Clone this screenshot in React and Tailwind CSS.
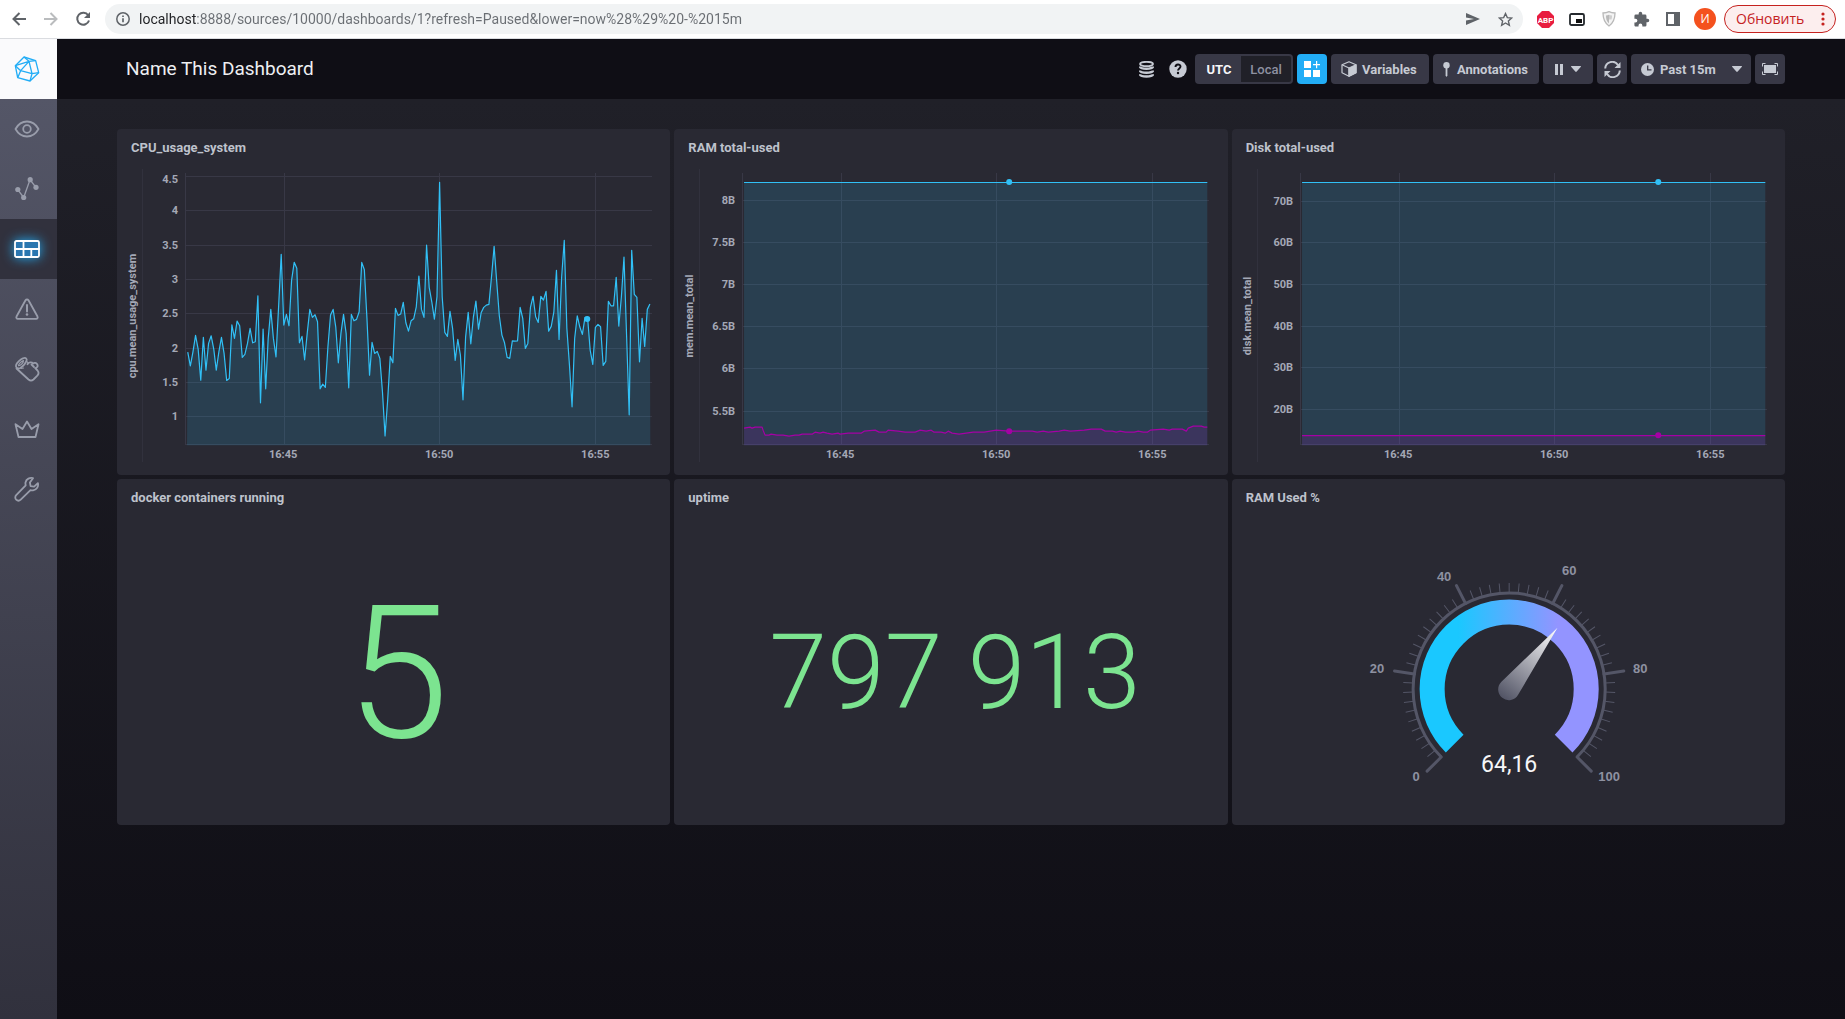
import React from "react";

/* ---------- browser bar ---------- */

function BrowserBar() {
  return (
    <div className="flex h-[39px] shrink-0 items-center border-b border-[#dadce0] bg-white pl-[7px] pr-[9px]">
      <div className="flex items-center text-[#5f6368]">
        <button aria-label="Back" className="grid h-8 w-6 place-items-center">
          <svg width="14" height="14" viewBox="0 0 14 14" fill="none" stroke="currentColor" strokeWidth="2">
            <path d="M14 7H1.500M7.500 1 1.500 7l6 6" />
          </svg>
        </button>
        <button aria-label="Forward" className="ml-2 grid h-8 w-6 place-items-center text-[#babcbe]">
          <svg width="14" height="14" viewBox="0 0 14 14" fill="none" stroke="currentColor" strokeWidth="2">
            <path d="M0 7h12.500M6.500 1l6 6-6 6" />
          </svg>
        </button>
        <button aria-label="Reload" className="ml-2 grid h-8 w-6 place-items-center">
          <svg width="16" height="16" viewBox="0 0 16 16" fill="none" stroke="currentColor" strokeWidth="2">
            <path d="M13.200 4.300A6 6 0 1 0 14 9.500" />
            <path d="M15 1v6H9z" fill="currentColor" stroke="none" />
          </svg>
        </button>
      </div>
      <div className="ml-[10px] flex h-[30px] min-w-0 flex-1 items-center rounded-full bg-[#f1f3f4] pl-[11px] pr-[2px]">
        <svg width="14" height="14" viewBox="0 0 14 14" fill="none" stroke="#5f6368" strokeWidth="1.500" className="shrink-0">
          <circle cx="7" cy="7" r="6.200" />
          <path d="M7 6.200v4M7 3.500v1.600" strokeWidth="1.700" />
        </svg>
        {/* the host name is darker than the rest of the address */}
        <input
          aria-label="Address"
          type="text"
          defaultValue="localhost:8888/sources/10000/dashboards/1?refresh=Paused&lower=now%28%29%20-%2015m"
          className="ml-[9px] min-w-0 flex-1 bg-[linear-gradient(90deg,#202124_57px,#6a6e73_57px)] bg-clip-text font-['Roboto',sans-serif] text-[14px] leading-5 text-transparent outline-none"
        />
        <button aria-label="Send" className="grid h-6 w-8 place-items-center">
          <svg width="14" height="12" viewBox="0 0 14 12" fill="#5f6368">
            <path d="M0 0l14 6L0 12V7.500L8 6 0 4.500z" />
          </svg>
        </button>
        <button aria-label="Bookmark" className="grid h-6 w-8 place-items-center">
          <svg width="15" height="15" viewBox="0 0 24 24" fill="none" stroke="#5f6368" strokeWidth="2.200">
            <path d="M12 2.500l2.900 6.500 7 .7-5.300 4.700 1.600 6.900-6.200-3.700-6.200 3.700 1.600-6.900L2.100 9.700l7-.7z" />
          </svg>
        </button>
      </div>
      <div className="flex items-center">
        <button aria-label="ABP" className="ml-[6px] grid h-8 w-8 place-items-center">
          <svg width="17" height="17" viewBox="0 0 17 17">
            <path d="M5 0h7l5 5v7l-5 5H5l-5-5V5z" fill="#e81d3f" />
            <text x="8.500" y="11.500" textAnchor="middle" fill="#fff" className="font-['Roboto',sans-serif] text-[8px] font-bold">
              ABP
            </text>
          </svg>
        </button>
        <button aria-label="Picture in picture" className="grid h-8 w-8 place-items-center">
          <svg width="16" height="13" viewBox="0 0 16 13">
            <rect x="1" y="1" width="14" height="11" rx="1.500" fill="none" stroke="#24292d" strokeWidth="1.800" />
            <rect x="7" y="6" width="6" height="4" fill="#111" />
          </svg>
        </button>
        <button aria-label="Shield" className="grid h-8 w-8 place-items-center">
          <svg width="14" height="16" viewBox="0 0 14 16">
            <path d="M1 2c2 0 4-.3 6-1.300C9 1.700 11 2 13 2c0 5.500-1 9.500-6 13C2 11.500 1 7.500 1 2z" fill="#f4f4f4" stroke="#b9b9b9" strokeWidth="1.300" />
            <path d="M4 4.500c1.200 0 2-.2 3-.8v8.800C4.500 10.500 4 7.500 4 4.500z" fill="#b9b9b9" />
            <path d="M7 3.700c1 .6 1.800.8 3 .8 0 1.500 0 2.500-.5 4H7z" fill="#cfcfcf" />
          </svg>
        </button>
        <button aria-label="Extensions" className="grid h-8 w-8 place-items-center">
          <svg width="17" height="17" viewBox="0 0 24 24" fill="#5f6368">
            <path d="M20.500 11H19V7a2 2 0 0 0-2-2h-4V3.500a2.500 2.500 0 0 0-5 0V5H4a2 2 0 0 0-2 2v3.800h1.500a2.700 2.700 0 0 1 0 5.400H2V20c0 1.100.9 2 2 2h3.800v-1.500a2.700 2.700 0 0 1 5.400 0V22H17a2 2 0 0 0 2-2v-4h1.500a2.500 2.500 0 0 0 0-5z" />
          </svg>
        </button>
        <button aria-label="Side panel" className="grid h-8 w-8 place-items-center">
          <svg width="14" height="14" viewBox="0 0 14 14">
            <rect x="1" y="1" width="12" height="12" fill="none" stroke="#5f6368" strokeWidth="2" />
            <rect x="8" y="1" width="5" height="12" fill="#5f6368" />
          </svg>
        </button>
        <button className="ml-[5px] grid h-[22px] w-[22px] place-items-center rounded-full bg-[#f4511e] font-['Open_Sans',sans-serif] text-[12px] leading-none text-white">
          И
        </button>
        <button className="ml-2 flex h-7 w-28 items-center justify-between rounded-full border border-[#c5221f] bg-[#fceeee] pl-[11px] pr-[10px] font-['Open_Sans',sans-serif] text-[14px] font-medium leading-none text-[#c5221f]">
          Обновить
          <svg width="4" height="14" viewBox="0 0 4 14" fill="currentColor">
            <circle cx="2" cy="2" r="1.600" />
            <circle cx="2" cy="7" r="1.600" />
            <circle cx="2" cy="12" r="1.600" />
          </svg>
        </button>
      </div>
    </div>
  );
}

/* ---------- side navigation ---------- */

const navIcons = [
  {
    label: "Host List",
    art: (
      <>
        <path d="M1.500 13C4 8.500 7.800 5.500 13 5.500S22 8.500 24.500 13C22 17.500 18.200 20.500 13 20.500S4 17.500 1.500 13z" />
        <circle cx="13" cy="13" r="3.800" />
      </>
    ),
  },
  {
    label: "Explore",
    art: (
      <>
        <path d="M3.700 13.700L9.700 21.500 16 3.700l6 7.800" strokeWidth="1.300" />
        <g fill="currentColor" stroke="none">
          <circle cx="3.800" cy="13.500" r="2.600" />
          <circle cx="9.700" cy="21.500" r="2.600" />
          <circle cx="16.200" cy="3.700" r="2.600" />
          <circle cx="22" cy="11.300" r="2.600" />
        </g>
      </>
    ),
  },
  {
    label: "Dashboards",
    active: true,
    art: (
      <>
        <rect x="1" y="5" width="24" height="16" rx="1.500" fill="#2a77b0" />
        <path d="M1 13h24M9.500 5v16M17.300 13v8" />
      </>
    ),
  },
  {
    label: "Alerting",
    art: (
      <>
        <path d="M11.500 4.300a1.800 1.800 0 0 1 3 0l9 16.200a1.500 1.500 0 0 1-1.300 2.300H3.800a1.500 1.500 0 0 1-1.300-2.300z" />
        <path d="M13 9v6.500" strokeWidth="2" />
        <circle cx="13" cy="18.500" r="1.300" fill="currentColor" stroke="none" />
      </>
    ),
  },
  {
    label: "Log Viewer",
    art: (
      <>
        <path d="M2.500 12.500l12 11c1.500 1.300 3.500 1.300 5 0l3.800-3.800c1.500-1.700 1.500-3.700.2-5.200l-2.300-2.300c2.300-.5 3-2.300 2-4-1-1.500-3-1.700-4.200-.7-1-1.500-4.500-1.500-5.500.7" />
        <path d="M9.500 2.200c2-1 3.800.5 3 2.600-1 2.800-3.500 5.700-6.200 7.200-2.500 1.300-4.800-.3-4.300-2.700C2.700 6.500 6.500 3.300 9.500 2.200z" />
        <path d="M9.500 4.500c-2.500 1-5 3.500-5 5.200 1.700.3 5-2.700 5-5.200zM12.500 5l2 2.500M7 12.500l2.500-.5" strokeWidth="1.200" />
        <path d="M17.500 8.500l2.500 2.500" />
      </>
    ),
  },
  {
    label: "Admin",
    art: <path d="M4.500 21L1.500 8.200l7 4.800L13 5.500l4.500 7.500 7-4.800L21.500 21z" />,
  },
  {
    label: "Configuration",
    art: (
      <path d="M19 2.200c-3-1-6.800.8-7.500 4.300-.2 1 0 2 .2 2.800L2.200 19.200a3 3 0 0 0 4.500 4.500l9.800-9.600c.8.300 1.700.4 2.600.2 3.600-.6 5.700-4 4.800-7.200l-3.800 3.600-3.500-.6-.7-3.600z" />
    ),
  },
];

function SideNav() {
  return (
    <nav className="flex w-[57px] shrink-0 flex-col bg-linear-to-b from-[#545667] from-[60px] to-[#31313d]">
      <a href="#home" aria-label="Home" className="grid h-[60px] place-items-center bg-[#fafafc] pr-1">
        <svg width="26" height="26" viewBox="0 0 78 78" fill="none" stroke="#22adf6" strokeWidth="4" strokeLinejoin="round">
          <path d="M30 3l35 11 9 36-26 25-37-10L4 29z" />
          <path d="M30 3l15 13 20-2M4 29l41-13M45 16l9 37-34-9zM4 29l16 15-9 21M54 53l-6 22M54 53l20-3" />
        </svg>
      </a>
      {navIcons.map(({ label, art, active }) => (
        <a
          key={label}
          href={"#" + label.toLowerCase().replace(" ", "-")}
          aria-label={label}
          className={
            active
              ? "grid h-[60px] place-items-center bg-[#31313d] pr-1 text-white"
              : "grid h-[60px] place-items-center pr-1 text-[#999dab]"
          }
        >
          <svg
            width="26"
            height="26"
            viewBox="0 0 26 26"
            fill="none"
            stroke="currentColor"
            strokeWidth="1.800"
            strokeLinejoin="round"
            strokeLinecap="round"
            className={active ? "overflow-visible drop-shadow-[0_0_6px_#22adf6]" : ""}
          >
            {art}
          </svg>
        </a>
      ))}
    </nav>
  );
}

/* ---------- dashboard header ---------- */

const toolButton =
  "flex h-[30px] items-center rounded-[4px] bg-[#383846] text-[13px] leading-none font-bold text-[#c6cad3]";

function Caret() {
  return (
    <svg width="10" height="6" viewBox="0 0 10 6" fill="currentColor">
      <path d="M.5 0h9a.5.5 0 0 1 .4.800L5.700 5.600a1 1 0 0 1-1.400 0L.1.800A.5.5 0 0 1 .5 0z" />
    </svg>
  );
}

function Header() {
  return (
    <header className="flex h-[60px] items-center justify-between bg-[#0f0e15] pl-[69px] pr-[60px]">
      <h1 className="text-[19px] leading-6 text-[#eeeff2]">Name This Dashboard</h1>
      <div className="flex items-center gap-1">
        <button aria-label="Data source" className="grid h-[30px] w-[30px] place-items-center text-[#c6cad3]">
          <svg width="15" height="17" viewBox="0 0 15 17" fill="none" stroke="currentColor" strokeWidth="1.800">
            <ellipse cx="7.500" cy="3" rx="6.500" ry="2.200" />
            <path d="M1 5.500c0 3 13 3 13 0M1 9.500c0 3 13 3 13 0M1 13.300c0 3 13 3 13 0" strokeWidth="2.400" />
          </svg>
        </button>
        <button aria-label="Help" className="grid h-[30px] w-[26px] place-items-center text-[#c6cad3]">
          <svg width="18" height="18" viewBox="0 0 18 18">
            <circle cx="9" cy="9" r="8.700" fill="currentColor" />
            <path d="M6.500 7c0-3.300 5-3.300 5-.4C11.500 8.500 9 8.500 9 10.600" fill="none" stroke="#0f0e15" strokeWidth="1.900" />
            <circle cx="9" cy="13" r="1.200" fill="#0f0e15" />
          </svg>
        </button>
        <div role="group" aria-label="Time zone" className="flex h-[30px] w-[98px] rounded-[4px] bg-[#383846] p-[2px] text-[13px] font-medium leading-none">
          <button aria-pressed="true" className="w-11 font-bold text-[#f6f6f8]">
            UTC
          </button>
          <button aria-pressed="false" className="flex-1 rounded-r-[2px] bg-[#202028] text-[#8e91a1]">
            Local
          </button>
        </div>
        <button aria-label="Add cell" className="grid h-[30px] w-[30px] place-items-center rounded-[4px] bg-[#22adf6] text-white">
          <svg width="16" height="16" viewBox="0 0 16 16" fill="currentColor">
            <path d="M0 0h7v7H0zM0 9h7v7H0zM9 9h7v7H9zM12 0h1.200v3h3v1.200h-3v3H12v-3H9V3h3z" />
          </svg>
        </button>
        <button className={toolButton + " w-[98px] gap-[5px] pl-[10px]"}>
          <svg width="16" height="16" viewBox="0 0 16 16" fill="none" stroke="currentColor" strokeWidth="1.200" strokeLinejoin="round">
            <path d="M8 .8l7 3v8l-7 3.500-7-3.500v-8z" />
            <path d="M1 3.800l7 3.200v8" />
            <path d="M8 7l7-3.200v8L8 15.300z" fill="currentColor" />
          </svg>
          Variables
        </button>
        <button className={toolButton + " w-[106px] gap-[7px] pl-[10px]"}>
          <svg width="7" height="15" viewBox="0 0 7 15" fill="currentColor">
            <circle cx="3.500" cy="3.300" r="3.200" />
            <path d="M2.600 6h1.800v7.500l-.9 1.500-.9-1.500z" />
          </svg>
          Annotations
        </button>
        <button aria-label="Auto refresh paused" className={toolButton + " w-[50px] justify-center gap-2"}>
          <svg width="8" height="11" viewBox="0 0 8 11" fill="currentColor">
            <path d="M0 0h3v11H0zM5 0h3v11H5z" />
          </svg>
          <Caret />
        </button>
        <button aria-label="Refresh" className={toolButton + " w-[30px] justify-center"}>
          <svg width="17" height="17" viewBox="0 0 17 17" fill="none" stroke="currentColor" strokeWidth="2">
            <path d="M1.200 7.500A7 7 0 0 1 14 4M15.800 9.500A7 7 0 0 1 3 13" />
            <path d="M16.500 1v6h-6zM.5 16v-6h6z" fill="currentColor" stroke="none" />
          </svg>
        </button>
        <button className={toolButton + " w-[120px] justify-between pl-[10px] pr-[9px]"}>
          <span className="flex items-center gap-[6px]">
            <svg width="13" height="13" viewBox="0 0 13 13">
              <circle cx="6.500" cy="6.500" r="6.500" fill="currentColor" />
              <path d="M6.700 2.500v4.300h3.800" fill="none" stroke="#383846" strokeWidth="1.300" />
            </svg>
            Past 15m
          </span>
          <Caret />
        </button>
        <button aria-label="Presentation mode" className={toolButton + " w-[30px] justify-center"}>
          <svg width="16" height="12" viewBox="0 0 16 12" fill="none" stroke="currentColor">
            <path d="M.5 3.500v-3h3M12.500.5h3v3M15.500 8.500v3h-3M3.500 11.500h-3v-3" />
            <rect x="2" y="2" width="12" height="8" fill="currentColor" stroke="none" />
          </svg>
        </button>
      </div>
    </header>
  );
}

/* ---------- charts ---------- */

const VIEW = "0 38 553 308";
const LEFT = 70;
const RIGHT = 533;
const BASE = 315;
const axisText = "fill-[#a4a8b6] text-[11px] font-bold";

function LineGraph({ yTitle, yTicks, series, gridId }) {
  return (
    <svg viewBox={VIEW} className="block h-auto w-full" role="img" aria-label={yTitle}>
      <text transform="translate(19 187) rotate(-90)" textAnchor="middle" className={axisText}>
        {yTitle}
      </text>
      <g stroke="#383846" shapeRendering="crispEdges">
        <path d="M25.500 40v293" stroke="#31313d" />
        {yTicks.map((t) => (
          <path key={t.label} d={`M68 ${t.y}.500H535`} />
        ))}
        <path d="M68.500 44v272M167.500 44v272M322.500 44v272M478.500 44v272M68 315.500H535" />
      </g>
      {yTicks.map((t) => (
        <text key={t.label} x="61" y={Math.max(t.y, 50) + 4} textAnchor="end" className={axisText}>
          {t.label}
        </text>
      ))}
      {series.map((s, i) => (
        <g key={gridId + i}>
          <path d={`M${LEFT} ${BASE + 1}L${s.points}L${RIGHT} ${BASE + 1}z`} fill={s.color} fillOpacity={s.fillOpacity} />
          <path d={`M${s.points}`} fill="none" stroke={s.color} strokeWidth="1.200" strokeLinejoin="round" />
          <circle cx={s.dot[0]} cy={s.dot[1]} r="3" fill={s.color} />
        </g>
      ))}
      {[
        ["16:45", 166],
        ["16:50", 322],
        ["16:55", 478],
      ].map(([label, x]) => (
        <text key={label} x={x} y="329" textAnchor="middle" className={axisText}>
          {label}
        </text>
      ))}
    </svg>
  );
}

const BLUE = "#31c0f6";
const MAGENTA = "#a500a5";

/* CPU samples, one every five seconds, in thirds of a plot unit from the top */
const cpuSamples = [
  681, 722, 680, 631, 672, 765, 637, 735, 655, 632, 672, 735, 680, 637, 685, 766, 760, 599, 640, 588, 602, 697, 688, 655,
  610, 653, 650, 512, 833, 612, 791, 640, 553, 640, 695, 545, 388, 600, 568, 602, 465, 412, 430, 653, 634, 704, 625, 553,
  577, 569, 590, 791, 777, 787, 665, 570, 553, 605, 713, 625, 568, 625, 788, 568, 587, 583, 560, 412, 434, 580, 750, 652,
  685, 679, 700, 800, 932, 825, 694, 713, 550, 571, 567, 532, 593, 618, 587, 581, 545, 453, 553, 577, 360, 487, 530, 582,
  515, 172, 515, 622, 634, 559, 610, 706, 643, 690, 824, 636, 562, 656, 575, 528, 612, 563, 547, 540, 538, 455, 364, 470,
  572, 630, 653, 697, 700, 647, 648, 647, 547, 580, 670, 655, 547, 514, 575, 592, 514, 525, 499, 618, 604, 560, 436, 643,
  455, 346, 610, 720, 845, 640, 572, 605, 628, 577, 577, 675, 718, 607, 598, 605, 721, 709, 529, 542, 542, 457, 603, 515,
  396, 632, 869, 376, 508, 517, 710, 580, 664, 553, 537,
];
const cpuPoints = cpuSamples
  .map((v, i) => `${(70.7 + i * 2.595).toFixed(1)} ${(v / 3 - 4).toFixed(1)}`)
  .join("L");

const ramUsed = [
  [70, 299], [76, 298], [78, 299], [81, 298], [88, 298], [89, 301], [91, 306], [95, 306], [97, 305], [103, 306], [109, 306],
  [115, 307], [121, 306], [125, 306], [128, 305], [138, 305], [141, 303], [146, 304], [149, 303], [153, 304], [158, 305],
  [164, 304], [166, 305], [174, 304], [187, 304], [190, 302], [201, 301], [205, 303], [212, 303], [214, 301], [224, 302],
  [231, 303], [241, 303], [246, 301], [252, 302], [257, 301], [260, 303], [267, 303], [271, 304], [274, 302], [278, 304],
  [285, 305], [299, 303], [310, 303], [322, 301], [335, 302], [358, 302], [363, 303], [369, 302], [374, 303], [385, 302],
  [390, 301], [396, 302], [410, 301], [417, 300], [427, 300], [431, 302], [438, 302], [442, 303], [446, 302], [451, 303],
  [460, 303], [464, 302], [469, 303], [473, 303], [476, 301], [489, 300], [495, 301], [498, 300], [508, 300], [512, 302],
  [514, 299], [519, 297], [527, 297], [530, 298], [533, 298],
]
  .map((p) => p.join(" "))
  .join("L");

function ticks(labels, ys) {
  return labels.map((label, i) => ({ label, y: ys[i] }));
}

/* ---------- gauge ---------- */

const CX = 277;
const CY = 210;

function polar(r, deg) {
  const a = (deg * Math.PI) / 180;
  return [(CX + r * Math.sin(a)).toFixed(2), (CY - r * Math.cos(a)).toFixed(2)];
}

function arc(r) {
  return `M${polar(r, -135)}A${r} ${r} 0 1 1 ${polar(r, 135)}`;
}

function Gauge({ value }) {
  const minor = [];
  const major = [];
  for (let i = 0; i <= 50; i++) {
    const deg = -135 + i * 5.4;
    const list = i % 10 === 0 ? major : minor;
    list.push(`M${polar(96, deg)}L${polar(i % 10 === 0 ? 116 : 106, deg)}`);
  }
  const labels = [
    ["0", 184, 302],
    ["20", 145, 194],
    ["40", 212, 102],
    ["60", 337, 96],
    ["80", 408, 194],
    ["100", 377, 302],
  ];
  return (
    <svg viewBox={VIEW} className="block h-auto w-full" role="img" aria-label="RAM used, percent">
      <defs>
        <linearGradient id="gauge-band" gradientUnits="userSpaceOnUse" x1="226" y1="0" x2="326" y2="0">
          <stop offset="0" stopColor="#1ac8ff" />
          <stop offset="1" stopColor="#9394ff" />
        </linearGradient>
        <linearGradient id="gauge-needle" gradientUnits="userSpaceOnUse" x1="0" y1="10" x2="0" y2="-77">
          <stop offset="0" stopColor="#545667" />
          <stop offset="1" stopColor="#ffffff" />
        </linearGradient>
      </defs>
      <path d={minor.join("")} stroke="#545667" strokeWidth="1" fill="none" />
      <path d={major.join("")} stroke="#545667" strokeWidth="3" strokeLinecap="round" fill="none" />
      <path d={arc(96)} stroke="#545667" strokeWidth="3" fill="none" />
      <path d={arc(77)} stroke="url(#gauge-band)" strokeWidth="25" fill="none" />
      <g transform={`translate(${CX} ${CY}) rotate(${-135 + value * 2.7})`}>
        <path d="M0-78L10.600-1A10.700 10.700 0 1 1-10.600-1z" fill="url(#gauge-needle)" />
      </g>
      {labels.map(([t, x, y]) => (
        <text
          key={t}
          x={x}
          y={y}
          textAnchor="middle"
          className="fill-[#8e91a1] font-['Liberation_Sans',Arial,sans-serif] text-[13px] font-bold"
        >
          {t}
        </text>
      ))}
      <text x={CX} y="293" textAnchor="middle" className="fill-[#f6f6f8] text-[23px]">
        64,16
      </text>
    </svg>
  );
}

/* ---------- cells ---------- */

function Cell({ title, children }) {
  return (
    <section className="flex flex-col overflow-hidden rounded-[4px] bg-[#292933]">
      <h2 className="h-[38px] px-[14px] pt-[10px] text-[13px] leading-[18px] font-bold text-[#bec2cc]">{title}</h2>
      {children}
    </section>
  );
}

function SingleStat({ size, children }) {
  return (
    <div
      className={
        "flex flex-1 items-center justify-center pt-1 pl-2 leading-none font-light whitespace-nowrap text-[#7ce490] " + size
      }
    >
      {children}
    </div>
  );
}

export default function App() {
  return (
    <div className="flex min-h-screen flex-col font-['Roboto',sans-serif]">
      <BrowserBar />
      <div className="flex flex-1">
        <SideNav />
        <div className="flex min-w-0 flex-1 flex-col">
          <Header />
          <main className="flex-1 bg-linear-to-b from-[#202028] to-[#0f0e15] px-[60px] py-[30px]">
            <div className="grid grid-cols-3 gap-1">
              <Cell title="CPU_usage_system">
                <LineGraph
                  gridId="cpu"
                  yTitle="cpu.mean_usage_system"
                  yTicks={ticks(["4.5", "4", "3.5", "3", "2.5", "2", "1.5", "1"], [47, 81, 116, 150, 184, 219, 253, 287])}
                  series={[{ points: cpuPoints, color: BLUE, fillOpacity: 0.15, dot: [470, 190] }]}
                />
              </Cell>
              <Cell title="RAM total-used">
                <LineGraph
                  gridId="ram"
                  yTitle="mem.mean_total"
                  yTicks={ticks(["8B", "7.5B", "7B", "6.5B", "6B", "5.5B"], [71, 113, 155, 197, 239, 282])}
                  series={[
                    { points: "70 53.5L533 53.5", color: BLUE, fillOpacity: 0.15, dot: [335, 53] },
                    { points: ramUsed, color: MAGENTA, fillOpacity: 0.15, dot: [335, 302] },
                  ]}
                />
              </Cell>
              <Cell title="Disk total-used">
                <LineGraph
                  gridId="disk"
                  yTitle="disk.mean_total"
                  yTicks={ticks(["70B", "60B", "50B", "40B", "30B", "20B"], [72, 113, 155, 197, 238, 280])}
                  series={[
                    { points: "70 53.5L533 53.5", color: BLUE, fillOpacity: 0.15, dot: [426, 53] },
                    { points: "70 306.5L533 306.5", color: MAGENTA, fillOpacity: 0.15, dot: [426, 306] },
                  ]}
                />
              </Cell>
              <Cell title="docker containers running">
                <SingleStat size="text-[185px]">5</SingleStat>
              </Cell>
              <Cell title="uptime">
                <SingleStat size="text-[104px]">797 913</SingleStat>
              </Cell>
              <Cell title="RAM Used %">
                <Gauge value={64.16} />
              </Cell>
            </div>
          </main>
        </div>
      </div>
    </div>
  );
}
